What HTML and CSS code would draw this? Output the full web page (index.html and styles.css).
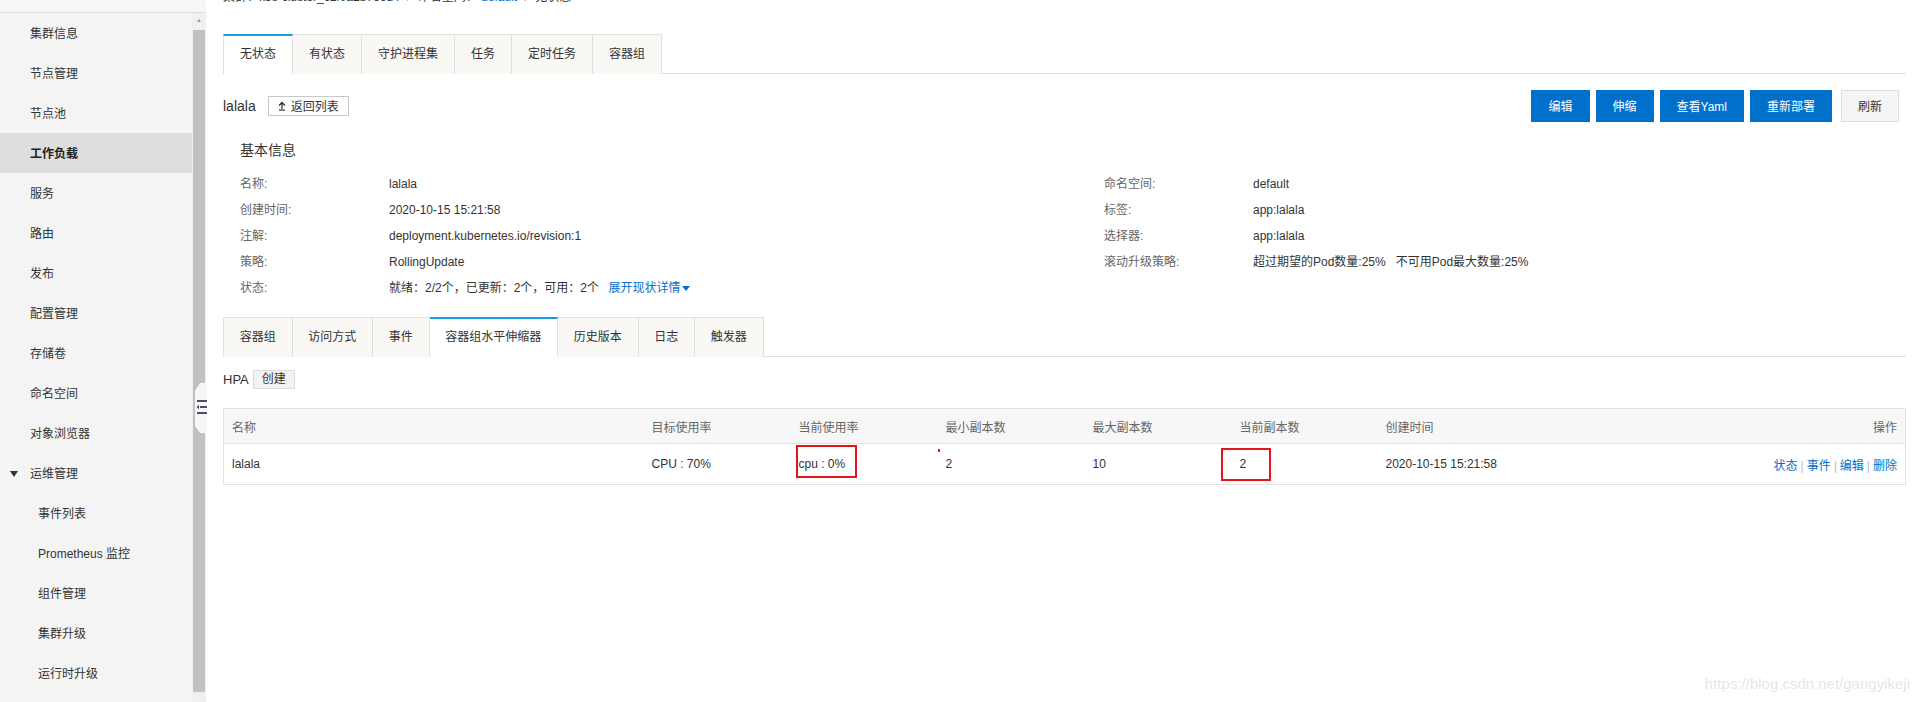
FILE: index.html
```html
<!DOCTYPE html>
<html lang="zh-CN">
<head>
  <meta charset="UTF-8" />
  <title>无状态 - lalala</title>
  <link rel="stylesheet" href="styles.css">
</head>
<body>
  <div class="layout">
    <aside class="sidebar">
      <div class="side-top"></div>
      <div class="side-body">
        <ul class="nav">
          <li>集群信息</li>
          <li>节点管理</li>
          <li>节点池</li>
          <li class="active">工作负载</li>
          <li>服务</li>
          <li>路由</li>
          <li>发布</li>
          <li>配置管理</li>
          <li>存储卷</li>
          <li>命名空间</li>
          <li>对象浏览器</li>
          <li class="group"><span class="caret"></span>运维管理</li>
          <li class="sub">事件列表</li>
          <li class="sub">Prometheus 监控</li>
          <li class="sub">组件管理</li>
          <li class="sub">集群升级</li>
          <li class="sub">运行时升级</li>
        </ul>
        <div class="scrollbar">
          <div class="sb-btn">&#9650;</div>
          <div class="sb-thumb"></div>
          <div class="sb-end"></div>
        </div>
      </div>
      <div class="collapse">
        <svg width="12" height="50" viewBox="0 0 12 50">
          <polygon points="5,0 12,0 12,50 5,50 0,43 0,8" fill="#f7f7f7" />
          <rect x="2" y="17" width="10" height="2" fill="#4d4d6b" />
          <rect x="5" y="23" width="7" height="2" fill="#4d4d6b" />
          <polygon points="1.5,24 4,21.8 4,26.2" fill="#4d4d6b" />
          <rect x="2" y="29" width="10" height="2" fill="#4d4d6b" />
        </svg>
      </div>
    </aside>

    <main class="main">
      <div class="crumb">
        集群：k8s-cluster_c1f0a2b7e6d4 <span class="sep">/</span> 命名空间： <a>default</a> <span class="sep">/</span> 无状态
      </div>

      <div class="tabs">
        <div class="tab active">无状态</div>
        <div class="tab">有状态</div>
        <div class="tab">守护进程集</div>
        <div class="tab">任务</div>
        <div class="tab">定时任务</div>
        <div class="tab">容器组</div>
      </div>

      <div class="head">
        <div class="head-left">
          <span class="title">lalala</span>
          <button class="back-btn">
            <svg width="8" height="10" viewBox="0 0 8 10">
              <path d="M1 4.5 L4 1.5 L7 4.5 M4 1.5 V8" stroke="#333" stroke-width="1.3" fill="none" />
              <rect x="1" y="8.5" width="6" height="1.2" fill="#333" />
            </svg>
            返回列表
          </button>
        </div>
        <div class="actions">
          <button class="btn primary">编辑</button>
          <button class="btn primary">伸缩</button>
          <button class="btn primary">查看Yaml</button>
          <button class="btn primary">重新部署</button>
          <button class="btn plain">刷新</button>
        </div>
      </div>

      <section class="info">
        <h3>基本信息</h3>
        <div class="info-grid">
          <div>
            <div class="row"><span class="k">名称:</span><span class="v">lalala</span></div>
            <div class="row"><span class="k">创建时间:</span><span class="v">2020-10-15 15:21:58</span></div>
            <div class="row"><span class="k">注解:</span><span class="v">deployment.kubernetes.io/revision:1</span></div>
            <div class="row"><span class="k">策略:</span><span class="v">RollingUpdate</span></div>
            <div class="row"><span class="k">状态:</span><span class="v">就绪：2/2个，已更新：2个，可用：2个 <a class="more">展开现状详情<span class="down"></span></a></span></div>
          </div>
          <div>
            <div class="row"><span class="k">命名空间:</span><span class="v">default</span></div>
            <div class="row"><span class="k">标签:</span><span class="v">app:lalala</span></div>
            <div class="row"><span class="k">选择器:</span><span class="v">app:lalala</span></div>
            <div class="row"><span class="k">滚动升级策略:</span><span class="v">超过期望的Pod数量:25% &nbsp; 不可用Pod最大数量:25%</span></div>
          </div>
        </div>
      </section>

      <div class="tabs sub-tabs">
        <div class="tab">容器组</div>
        <div class="tab">访问方式</div>
        <div class="tab">事件</div>
        <div class="tab active">容器组水平伸缩器</div>
        <div class="tab">历史版本</div>
        <div class="tab">日志</div>
        <div class="tab">触发器</div>
      </div>

      <div class="hpa">
        <span class="hpa-label">HPA</span>
        <button class="small-btn">创建</button>
      </div>

      <table class="grid">
        <colgroup>
          <col style="width:420px">
          <col style="width:147px">
          <col style="width:147px">
          <col style="width:147px">
          <col style="width:147px">
          <col style="width:146px">
          <col style="width:260px">
          <col>
        </colgroup>
        <thead>
          <tr>
            <th>名称</th>
            <th>目标使用率</th>
            <th>当前使用率</th>
            <th>最小副本数</th>
            <th>最大副本数</th>
            <th>当前副本数</th>
            <th>创建时间</th>
            <th class="right">操作</th>
          </tr>
        </thead>
        <tbody>
          <tr>
            <td>lalala</td>
            <td>CPU : 70%</td>
            <td><span class="mark mark-cpu">cpu : 0%</span></td>
            <td><span class="dot-wrap">2</span></td>
            <td>10</td>
            <td><span class="mark mark-num">2</span></td>
            <td>2020-10-15 15:21:58</td>
            <td class="right ops"><a>状态</a><span class="bar">|</span><a>事件</a><span class="bar">|</span><a>编辑</a><span class="bar">|</span><a>删除</a></td>
          </tr>
        </tbody>
      </table>
    </main>
  </div>

  <div class="watermark">https://blog.csdn.net/gangyikeji</div>
</body>
</html>
```

FILE: styles.css
```css
html, body {
  margin: 0;
  padding: 0;
  height: 100%;
  overflow: hidden;
}
body {
  font-family: "Liberation Sans", "Noto Sans CJK SC", sans-serif;
  font-size: 12px;
  color: #333;
  background: #fff;
}
a {
  color: #0070cc;
  text-decoration: none;
  cursor: pointer;
}
button {
  font-family: inherit;
  cursor: pointer;
}
.layout {
  display: flex;
  height: 100vh;
}

/* sidebar */
.sidebar {
  position: relative;
  width: 206px;
  flex-shrink: 0;
  display: flex;
  flex-direction: column;
  background: #f4f4f4;
}
.side-top {
  height: 12px;
  border-bottom: 1px solid #dcdcdc;
  background: #f6f6f6;
}
.side-body {
  flex: 1;
  display: flex;
  min-height: 0;
}
.nav {
  list-style: none;
  margin: 0;
  padding: 0;
  width: 192px;
}
.nav li {
  position: relative;
  height: 40px;
  line-height: 42px;
  padding-left: 30px;
  color: #333;
}
.nav li.active {
  background: #dedede;
  font-weight: bold;
  color: #222;
}
.nav li.sub {
  padding-left: 38px;
}
.caret {
  position: absolute;
  left: 10px;
  top: 18px;
  width: 0;
  height: 0;
  border-left: 4px solid transparent;
  border-right: 4px solid transparent;
  border-top: 6px solid #333;
}
.scrollbar {
  width: 14px;
  display: flex;
  flex-direction: column;
  background: #f0f0f0;
}
.sb-btn {
  height: 17px;
  font-size: 6px;
  line-height: 14px;
  text-align: center;
  color: #a3a3a3;
}
.sb-thumb {
  flex: 1;
  background: #c1c1c1;
  margin: 0 1px;
}
.sb-end {
  height: 10px;
}
.collapse {
  position: absolute;
  left: 195px;
  top: 383px;
  width: 12px;
  height: 50px;
}
.collapse svg {
  display: block;
}

/* main */
.main {
  flex: 1;
  min-width: 0;
  padding: 0 13px 0 17px;
}
.crumb {
  height: 20px;
  line-height: 20px;
  margin-top: -13px;
  margin-bottom: 27px;
  color: #333;
  white-space: nowrap;
}
.crumb .sep {
  color: #999;
  margin: 0 4px;
}

.tabs {
  display: flex;
  border-bottom: 1px solid #e0e0e0;
}
.tab {
  height: 40px;
  box-sizing: border-box;
  margin-bottom: -1px;
  padding: 0 16px;
  line-height: 38px;
  background: #f9f8f5;
  border: 1px solid #e0e0e0;
  border-left: none;
  border-bottom: none;
  color: #333;
}
.sub-tabs .tab {
  padding: 0 15.75px;
}
.tab:first-child {
  border-left: 1px solid #e0e0e0;
}
.tab.active {
  background: #fff;
  border-top: 2px solid #1b9de2;
  line-height: 37px;
}

.head {
  display: flex;
  justify-content: space-between;
  align-items: center;
  margin-top: 15px;
  height: 33px;
}
.head-left {
  display: flex;
  align-items: center;
}
.title {
  font-size: 14px;
  color: #333;
}
.back-btn {
  margin-left: 12px;
  height: 20px;
  padding: 0 9px;
  display: flex;
  align-items: center;
  gap: 5px;
  border: 1px solid #c8c8c8;
  background: #fff;
  font-size: 12px;
  color: #333;
}
.actions {
  display: flex;
  margin-right: 7px;
}
.btn {
  height: 32px;
  padding: 0 17px;
  margin-left: 6px;
  font-size: 12px;
  border: none;
}
.btn.primary {
  background: #0070cc;
  color: #fff;
}
.btn.plain {
  margin-left: 9px;
  padding: 0 16px;
  background: #f5f5f5;
  border: 1px solid #dcdcdc;
  color: #333;
}

.info {
  margin-top: 18px;
  padding-left: 17px;
}
.info h3 {
  margin: 0 0 11px;
  font-size: 14px;
  font-weight: normal;
  line-height: 20px;
  color: #333;
}
.info-grid {
  display: grid;
  grid-template-columns: 864px 1fr;
}
.row {
  display: flex;
  line-height: 26px;
  height: 26px;
}
.row .k {
  width: 149px;
  color: #666;
}
.row .v {
  color: #333;
}
.more {
  margin-left: 6px;
}
.down {
  display: inline-block;
  width: 0;
  height: 0;
  margin-left: 2px;
  vertical-align: middle;
  border-left: 4px solid transparent;
  border-right: 4px solid transparent;
  border-top: 5px solid #0070cc;
}

.sub-tabs {
  margin-top: 16px;
}

.hpa {
  display: flex;
  align-items: center;
  gap: 4px;
  margin-top: 12px;
  height: 20px;
}
.hpa-label {
  font-size: 13px;
  color: #333;
}
.small-btn {
  height: 19px;
  padding: 0 8px;
  font-size: 12px;
  line-height: 17px;
  border: 1px solid #dcdcdc;
  background: #f3f3f3;
  color: #333;
}

.grid {
  margin-top: 19px;
  width: 100%;
  table-layout: fixed;
  border-collapse: collapse;
  border: 1px solid #e3e3e3;
}
.grid th {
  height: 34px;
  padding: 0 8px;
  background: #f7f7f7;
  font-weight: normal;
  text-align: left;
  color: #666;
  border-bottom: 1px solid #e3e3e3;
}
.grid td {
  height: 40px;
  padding: 0 8px;
  color: #333;
}
.grid .right {
  text-align: right;
}
.ops .bar {
  color: #bbb;
  margin: 0 3px;
}
.mark,
.dot-wrap {
  position: relative;
  display: inline-block;
  line-height: 16px;
}
.mark::after {
  content: "";
  position: absolute;
  box-sizing: border-box;
  border: 2px solid #e5141b;
  height: 33px;
}
.mark-cpu::after {
  left: -3px;
  top: -11px;
  width: 61px;
}
.mark-num::after {
  left: -19px;
  top: -8px;
  width: 50px;
}
.dot-wrap::before {
  content: "";
  position: absolute;
  left: -8px;
  top: -7px;
  width: 2px;
  height: 3px;
  background: #e5141b;
}

.watermark {
  position: fixed;
  right: 9px;
  bottom: 9px;
  font-family: "Liberation Sans", sans-serif;
  font-size: 15px;
  line-height: 18px;
  color: #e6e6e6;
}
```
